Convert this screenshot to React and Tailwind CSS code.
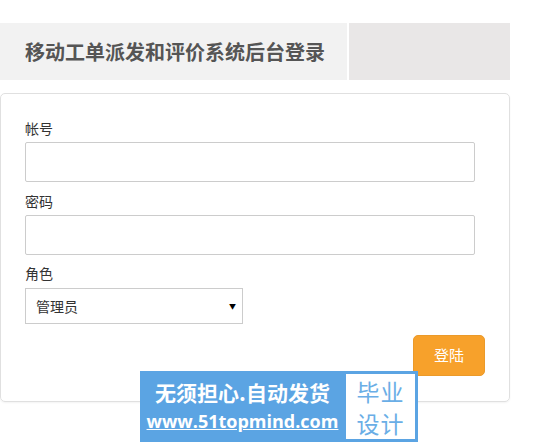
import React from 'react';

const font = { fontFamily: '"Microsoft YaHei", "Noto Sans CJK SC", "Liberation Sans", sans-serif' };

class App extends React.Component {
    render() {
        return (
            <div className="relative w-[560px] h-[442px] bg-white overflow-hidden" style={font}>
                <div className="w-[510px] pt-[23px]">
                    {/* header */}
                    <div className="flex h-[57px]">
                        <div className="w-[347px] bg-[#f2f2f2] flex items-center pl-[25px]">
                            <span className="whitespace-nowrap text-[20px] font-semibold text-[#555]">移动工单派发和评价系统后台登录</span>
                        </div>
                        <div className="w-[2px] bg-white"></div>
                        <div className="flex-1 bg-[#e9e7e7]"></div>
                    </div>

                    {/* form card */}
                    <div className="mt-[13px] h-[309px] border border-[#e0e0e0] rounded-[5px] pl-[24px] pr-[24px] pt-[24px] shadow-[0_1px_2px_rgba(0,0,0,0.05)]">
                        <label className="block text-[14px] leading-[20px] text-[#333]">帐号</label>
                        <input type="text" className="mt-[4px] block w-[450px] h-[40px] border border-[#ccc] rounded-[2px] outline-none px-2" />

                        <label className="block mt-[9px] text-[14px] leading-[20px] text-[#333]">密码</label>
                        <input type="password" className="mt-[4px] block w-[450px] h-[40px] border border-[#ccc] rounded-[2px] outline-none px-2" />

                        <label className="block mt-[8px] text-[14px] leading-[20px] text-[#333]">角色</label>
                        <div className="mt-[5px] w-[218px] h-[36px] border border-[#ccc] flex items-center justify-between pl-[10px] pr-[6px] text-[14px] text-[#333]">
                            <span>管理员</span>
                            <span className="text-[7px] text-black">▼</span>
                        </div>

                        <div className="flex justify-end mt-[11px]">
                            <button type="button" className="w-[72px] h-[41px] rounded-[5px] bg-[#f7a12b] border border-[#eb9a2a] text-white text-[15px]">登陆</button>
                        </div>
                    </div>
                </div>

                {/* watermark */}
                <div className="absolute left-[140px] top-[371px] w-[278px] h-[71px] bg-[#5ba4e3] flex">
                    <div className="w-[205px] flex flex-col items-center pt-[6px]">
                        <span className="whitespace-nowrap text-[21px] font-bold leading-[30px] text-white">无须担心.自动发货</span>
                        <span className="whitespace-nowrap text-[18px] font-bold leading-[28px] text-white underline" style={{ fontFamily: '"Open Sans", "Liberation Sans", sans-serif' }}>www.51topmind.com</span>
                    </div>
                    <div className="my-[2px] w-[71px] bg-white border border-[#5ba4e3] flex flex-col items-center justify-center text-[#6aaee6] text-[23px] leading-[32px] tracking-[1px]">
                        <span>毕业</span>
                        <span>设计</span>
                    </div>
                </div>
            </div>
        );
    }
}

export default App;
